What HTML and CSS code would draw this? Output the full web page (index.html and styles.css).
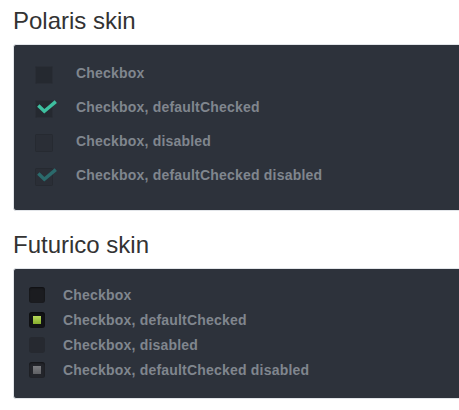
FILE: index.html
```html
<!DOCTYPE html>
<html>
<head>
<meta charset="utf-8">
<link rel="stylesheet" href="styles.css">
</head>
<body>
<h2 class="title">Polaris skin</h2>
<div class="panel polaris">
  <div class="row">
    <svg class="pbox" viewBox="0 0 24 24" width="24" height="24"><rect x="0.5" y="3.5" width="17" height="17" rx="1" class="p-off"/></svg>
    <span class="label">Checkbox</span>
  </div>
  <div class="row">
    <svg class="pbox" viewBox="0 0 24 24" width="24" height="24"><rect x="0.5" y="3.5" width="17" height="17" rx="1" class="p-off"/><path d="M3.3 8.6 L9.3 14.3 L20.8 4.6" class="p-check"/></svg>
    <span class="label">Checkbox, defaultChecked</span>
  </div>
  <div class="row">
    <svg class="pbox" viewBox="0 0 24 24" width="24" height="24"><rect x="0.5" y="3.5" width="17" height="17" rx="1" class="p-dis"/></svg>
    <span class="label">Checkbox, disabled</span>
  </div>
  <div class="row">
    <svg class="pbox" viewBox="0 0 24 24" width="24" height="24"><rect x="0.5" y="3.5" width="17" height="17" rx="1" class="p-dis"/><path d="M3.3 8.6 L9.3 14.3 L20.8 4.6" class="p-check-dis"/></svg>
    <span class="label">Checkbox, defaultChecked disabled</span>
  </div>
</div>
<h2 class="title second">Futurico skin</h2>
<div class="panel futurico">
  <div class="frow">
    <span class="fbox"></span>
    <span class="label">Checkbox</span>
  </div>
  <div class="frow">
    <span class="fbox checked"><span class="dot"></span></span>
    <span class="label">Checkbox, defaultChecked</span>
  </div>
  <div class="frow">
    <span class="fbox disabled"></span>
    <span class="label">Checkbox, disabled</span>
  </div>
  <div class="frow">
    <span class="fbox disabled-checked"><span class="dot grey"></span></span>
    <span class="label">Checkbox, defaultChecked disabled</span>
  </div>
</div>
</body>
</html>
```

FILE: styles.css
```css
html, body {
  overflow: hidden;
}
body {
  margin: 0;
  padding: 0 0 0 13px;
  background: #ffffff;
  font-family: "Liberation Sans", Arial, sans-serif;
}
.title {
  margin: 7px 0 9px 0;
  font-size: 24px;
  line-height: 28px;
  font-weight: normal;
  color: #333333;
}
.title.second {
  margin-top: 20px;
}
.panel {
  margin-right: -20px;
  background: #2d323b;
  border: 1px solid #e2e5e9;
  border-radius: 3px;
}
.polaris {
  padding: 11px 0 18px 21px;
}
.futurico {
  padding: 13px 0 16px 15px;
}
.row {
  display: flex;
  align-items: center;
  height: 34px;
  gap: 17px;
}
.pbox {
  display: block;
  flex: none;
  margin-top: 3px;
}
.p-off {
  fill: #252930;
  stroke: #2a2e36;
  stroke-width: 1;
}
.p-dis {
  fill: #2a2e36;
  stroke: #262a31;
  stroke-width: 1;
}
.p-check {
  fill: none;
  stroke: #3ebf9f;
  stroke-width: 3.4;
  stroke-linejoin: miter;
}
.p-check-dis {
  fill: none;
  stroke: #2b6a6c;
  stroke-width: 3.4;
  stroke-linejoin: miter;
}
.label {
  font-size: 14px;
  font-weight: bold;
  letter-spacing: 0.2px;
  color: #80868e;
  white-space: nowrap;
}
.frow {
  display: flex;
  align-items: center;
  height: 25px;
  gap: 18px;
}
.fbox {
  flex: none;
  width: 16px;
  height: 16px;
  border-radius: 3px;
  background: #1b1c20;
  box-shadow: inset 0 1px 2px rgba(0, 0, 0, 0.5);
  display: flex;
  align-items: center;
  justify-content: center;
}
.fbox.checked {
  background: #121316;
}
.fbox.disabled {
  background: #262930;
  box-shadow: none;
}
.fbox.disabled-checked {
  background: #23252b;
}
.dot {
  width: 8px;
  height: 8px;
  background: linear-gradient(#b6d85a, #86ad2c);
}
.dot.grey {
  background: linear-gradient(#7a7b7f, #5f6064);
}
```
